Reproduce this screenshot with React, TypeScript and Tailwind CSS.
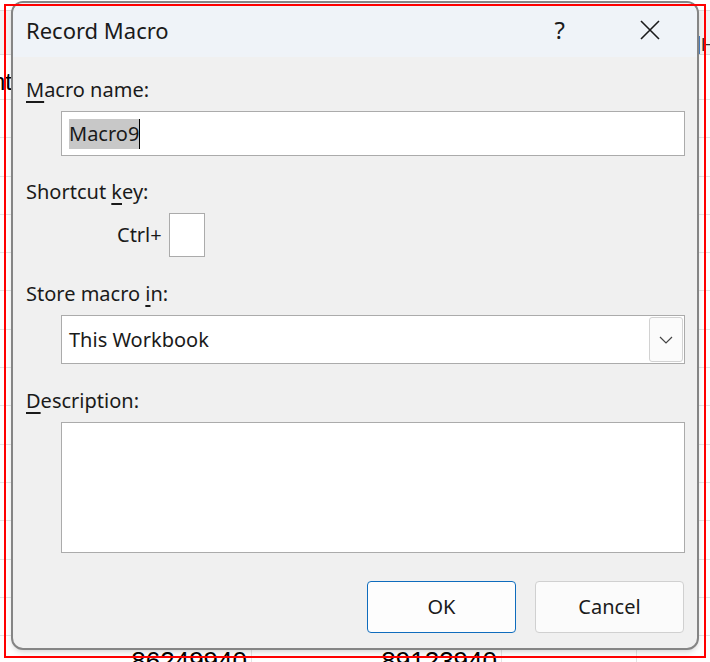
import type { ReactNode } from "react"

const ROWS = 15

function Label({ children }: { children: ReactNode }) {
  return <div className="h-[28px] text-[20px] leading-[28px] text-[#1a1a1a]">{children}</div>
}

function Key({ children }: { children: ReactNode }) {
  return <span className="underline decoration-[1.5px] underline-offset-[4px]">{children}</span>
}

function Sheet() {
  // the Excel grid behind the dialog, only its edges show
  return (
    <div className="flex h-[662px] w-[710px] flex-col overflow-hidden bg-white font-['Liberation_Sans',sans-serif] text-black">
      <div className="h-[10px] shrink-0" />
      <div className="flex h-[45px] shrink-0 items-end border-y border-[#dcdcdc] bg-[#f3f3f3]">
        <div className="ml-[698px] flex h-[18px] items-center border-l-2 border-[#4a7fc1] pl-[1px] text-[18px] leading-none text-[#333]">
          H
        </div>
      </div>
      <div className="flex h-[45px] shrink-0 items-center border-b border-[#e4e4e4] pt-[10px]">
        <div className="flex w-[12px] justify-end overflow-hidden whitespace-nowrap text-[24px] leading-none">
          Account
        </div>
      </div>
      {Array.from({ length: ROWS }).map((_, i) => (
        <div key={i} className="flex h-[38.3px] shrink-0 border-b border-[#e4e4e4]">
          <div className="flex w-[252px] items-start justify-end border-r border-[#e4e4e4] pr-[4px] pt-[12px] text-[26px] leading-none">
            {i === ROWS - 1 ? "86249940" : ""}
          </div>
          <div className="flex w-[250px] items-start justify-end border-r border-[#e4e4e4] pr-[4px] pt-[12px] text-[26px] leading-none">
            {i === ROWS - 1 ? "89123940" : ""}
          </div>
          <div className="w-[135px] border-r border-[#e4e4e4]" />
        </div>
      ))}
    </div>
  )
}

export default function App() {
  return (
    <div className="relative h-[662px] w-[710px] overflow-hidden bg-white font-['Noto_Sans',sans-serif]">
      <Sheet />

      <div className="absolute left-[11px] top-[1px] flex h-[649px] w-[688px] flex-col overflow-hidden rounded-[12px] border-2 border-[#858585] bg-[#f0f0f0] shadow-md">
        <div className="flex h-[54px] shrink-0 items-center bg-[#eff3f8] pl-[13px]">
          <span className="text-[22px] text-[#1a1a1a]">Record Macro</span>
          <span className="ml-auto mr-[74px] text-[24px] text-[#1a1a1a]">?</span>
          <svg width="22" height="22" viewBox="0 0 22 22" className="mr-[36px]">
            <path d="M2 2 L20 20 M20 2 L2 20" stroke="#1a1a1a" strokeWidth="1.6" fill="none" />
          </svg>
        </div>

        <div className="flex flex-1 flex-col pl-[13px] pr-[12px] pt-[19px]">
          <Label>
            <Key>M</Key>acro name:
          </Label>
          <div className="ml-[35px] mt-[7px] flex h-[45px] items-center border border-[#ababab] bg-white pl-[7px]">
            <span className="bg-[#c8c8c8] text-[20px] leading-[30px] text-[#1a1a1a]">Macro9</span>
            <span className="h-[30px] w-px bg-black" />
          </div>

          <div className="mt-[22px]">
            <Label>
              Shortcut <Key>k</Key>ey:
            </Label>
          </div>
          <div className="mt-[7px] flex items-center pl-[91px]">
            <span className="text-[20px] text-[#1a1a1a]">Ctrl+</span>
            <div className="ml-[7px] h-[44px] w-[36px] border border-[#ababab] bg-white" />
          </div>

          <div className="mt-[23px]">
            <Label>
              Store macro <Key>i</Key>n:
            </Label>
          </div>
          <div className="ml-[35px] mt-[7px] flex h-[49px] items-center border border-[#ababab] bg-white pl-[7px] pr-px">
            <span className="text-[20px] text-[#1a1a1a]">This Workbook</span>
            <div className="ml-auto flex h-[45px] w-[34px] items-center justify-center rounded-[3px] border border-[#d2d2d2] bg-[#fbfbfb]">
              <svg width="14" height="8" viewBox="0 0 14 8">
                <path d="M1 1 L7 7 L13 1" stroke="#444" strokeWidth="1.2" fill="none" />
              </svg>
            </div>
          </div>

          <div className="mt-[23px]">
            <Label>
              <Key>D</Key>escription:
            </Label>
          </div>
          <div className="ml-[35px] mt-[7px] h-[131px] border border-[#ababab] bg-white" />

          <div className="mt-[28px] flex justify-end gap-[19px] pr-px">
            <button className="h-[52px] w-[149px] rounded-[4px] border border-[#0f6cbd] bg-[#fdfdfd] text-[20px] text-[#1a1a1a]">
              OK
            </button>
            <button className="h-[52px] w-[149px] rounded-[4px] border border-[#d0d0d0] bg-[#fbfbfb] text-[20px] text-[#1a1a1a]">
              Cancel
            </button>
          </div>
        </div>
      </div>

      <div className="pointer-events-none absolute left-[4px] top-[4px] h-[654px] w-[702px] border-2 border-[#ff0000]" />
    </div>
  )
}
